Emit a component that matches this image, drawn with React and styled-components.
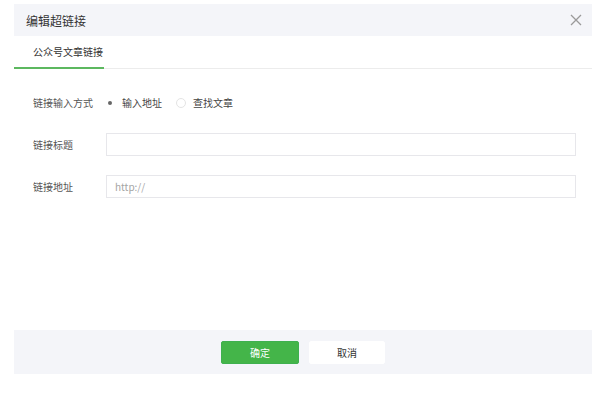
import React, { useState } from "react";
import styled, { createGlobalStyle } from "styled-components";

const GlobalStyle = createGlobalStyle`
  body {
    margin: 0;
    background: #fff;
    font-family: "Noto Sans CJK SC", "Liberation Sans", sans-serif;
    color: #353535;
  }
`;

const App = () => {
  const [mode, setMode] = useState("url");

  return (
    <>
      <GlobalStyle />
      <Page>
        <Dialog>
          <Header>
            <Title>编辑超链接</Title>
            <Close aria-label="close">
              <svg width="12" height="12" viewBox="0 0 12 12">
                <path d="M1 1L11 11M11 1L1 11" stroke="#9a9a9a" strokeWidth="1.3" fill="none" />
              </svg>
            </Close>
          </Header>
          <Tabs>
            <Tab active>公众号文章链接</Tab>
          </Tabs>
          <Body>
            <Row>
              <Label>链接输入方式</Label>
              <RadioGroup>
                <RadioItem onClick={() => setMode("url")}>
                  <Radio checked={mode === "url"} />
                  输入地址
                </RadioItem>
                <RadioItem onClick={() => setMode("search")}>
                  <Radio checked={mode === "search"} />
                  查找文章
                </RadioItem>
              </RadioGroup>
            </Row>
            <Row>
              <Label>链接标题</Label>
              <Input />
            </Row>
            <Row>
              <Label>链接地址</Label>
              <Input placeholder="http://" />
            </Row>
          </Body>
          <Footer>
            <Button primary>确定</Button>
            <Button>取消</Button>
          </Footer>
        </Dialog>
      </Page>
    </>
  );
};

export default App;

const Page = styled.div`
  padding: 4px 8px 0 14px;
`;

const Dialog = styled.div`
  width: 578px;
  display: flex;
  flex-direction: column;
`;

const Header = styled.div`
  height: 32px;
  background: #f4f5f9;
  display: flex;
  align-items: center;
  justify-content: space-between;
  padding: 0 10px 0 12px;
`;

const Title = styled.div`
  font-size: 12px;
  color: #333;
`;

const Close = styled.div`
  width: 12px;
  height: 12px;
  display: flex;
`;

const Tabs = styled.div`
  height: 32px;
  display: flex;
  border-bottom: 1px solid #ececec;
`;

const Tab = styled.div`
  width: 90px;
  box-sizing: border-box;
  padding-left: 19px;
  display: flex;
  align-items: center;
  font-size: 10px;
  color: #333;
  margin-bottom: -1px;
  border-bottom: 2px solid ${(p) => (p.active ? "#5cb85f" : "transparent")};
`;

const Body = styled.div`
  height: 261px;
  box-sizing: border-box;
  padding: 22px 16px 0 19px;
  display: flex;
  flex-direction: column;
  gap: 19px;
`;

const Row = styled.div`
  display: flex;
  align-items: center;
  min-height: 23px;
`;

const Label = styled.div`
  width: 73px;
  font-size: 10px;
  color: #555;
`;

const RadioGroup = styled.div`
  display: flex;
  gap: 14px;
  margin-left: -1px;
`;

const RadioItem = styled.label`
  display: flex;
  align-items: center;
  gap: 7px;
  font-size: 10px;
  color: #444;
  cursor: pointer;
`;

const Radio = styled.span`
  width: 10px;
  height: 10px;
  border-radius: 50%;
  box-sizing: border-box;
  border: 1px solid ${(p) => (p.checked ? "transparent" : "#e4e4e4")};
  display: flex;
  align-items: center;
  justify-content: center;

  &::after {
    content: "";
    width: 4px;
    height: 4px;
    border-radius: 50%;
    background: ${(p) => (p.checked ? "#666" : "transparent")};
  }
`;

const Input = styled.input`
  flex: 1;
  height: 23px;
  box-sizing: border-box;
  border: 1px solid #e7e7eb;
  padding: 0 8px;
  font-size: 10px;
  font-family: inherit;
  color: #333;
  outline: none;

  &::placeholder {
    color: #a5a5a5;
  }
`;

const Footer = styled.div`
  height: 44px;
  background: #f4f5f9;
  display: flex;
  align-items: center;
  justify-content: center;
  gap: 10px;
`;

const Button = styled.button`
  width: ${(p) => (p.primary ? "78px" : "76px")};
  height: 23px;
  border-radius: 2px;
  border: 1px solid ${(p) => (p.primary ? "#3fb04f" : "#fff")};
  background: ${(p) => (p.primary ? "#44b549" : "#fff")};
  color: ${(p) => (p.primary ? "#fff" : "#333")};
  font-size: 10px;
  font-family: inherit;
  cursor: pointer;
`;
